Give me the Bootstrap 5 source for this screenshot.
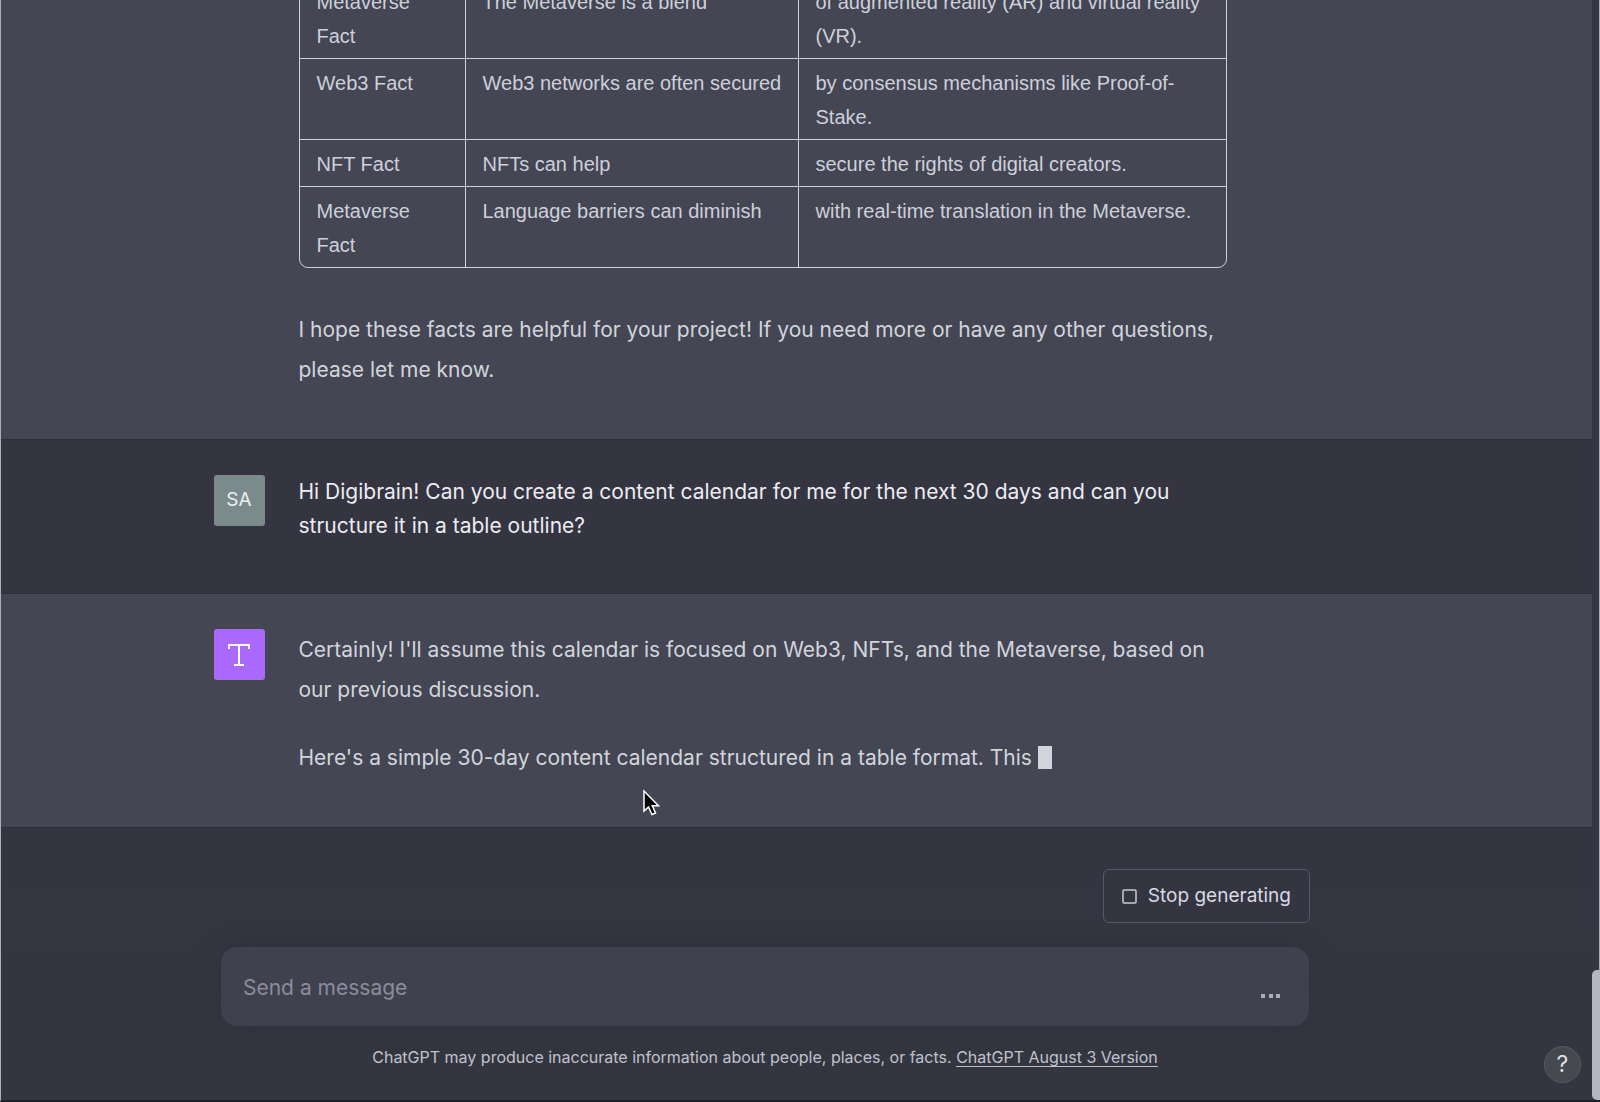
<!DOCTYPE html>
<html lang="en">
<head>
<meta charset="utf-8">
<meta name="viewport" content="width=device-width, initial-scale=1">
<title>ChatGPT</title>
<link href="https://cdn.jsdelivr.net/npm/bootstrap@5.3.0/dist/css/bootstrap.min.css" rel="stylesheet">
<style>
  body { font-family: Inter, "Liberation Sans", sans-serif; font-size: 21px; color: #ececf1; background: #343541; }
  .app { height: 100vh; border-left: 1px solid #a6b0b8; border-bottom: 2px solid #1f202a; }
  .pane { min-width: 0; }
  .scroll-track { width: 8px; background: #353643; border-right: 1px solid #a9a9b4; }
  .scroll-thumb { height: 130px; width: 8px; background: #b5b6c4; border-radius: 5px 0 0 5px; }
  .turn { padding: 35px 62px 50px 0; border-bottom: 1px solid #2e2f3b; }
  .turn-bot { padding-bottom: 49px; background: #444654; color: #d1d5db; }
  .turn-inner { max-width: 1104px; padding-right: 91px; gap: 34px; }
  .avatar { width: 51px; height: 51px; border-radius: 3px; font-size: 19px; }
  .avatar-user { background: #7b8b8c; color: #e8eeee; }
  .avatar-bot { background: #ab68ff; }
  .ask { line-height: 34px; }
  .answer { padding-top: 1px; }
  .answer p { line-height: 40px; margin-bottom: 28px; }
  .answer p:last-child { margin-bottom: 0; }
  .facts { font-family: "Liberation Sans", Arial, sans-serif; font-size: 20px; line-height: 34px; table-layout: fixed; border-collapse: separate; border-spacing: 0; border: 1px solid #d0d1de; border-radius: 9px; margin-bottom: 42px; color: #cdd0d9; }
  .facts td { padding: 7px 14px 5px 17px; vertical-align: top; border-left: 1px solid #d0d1de; border-top: 1px solid #d0d1de; }
  .facts td:first-child { border-left: 0; }
  .facts tr:first-child td { border-top: 0; }
  .facts .c1 { width: 165px; } .facts .c2 { width: 333px; }
  .caret { display: inline-block; width: 14px; height: 23px; background: #d1d5db; vertical-align: -4px; }
  .composer { padding: 41px 63px 31px 0; background: linear-gradient(#353542 20%, #34363f 45%); }
  .composer-inner { max-width: 1090px; }
  .stop { height: 54px; padding: 0 18px; gap: 11px; font-size: 19px; color: #d9d9e3; background: #343541; border: 1px solid #565869; border-radius: 6px; }
  .prompt { height: 79px; margin: 24px 1px 0; background: #40414f; border-radius: 16px; box-shadow: 0 0 22px rgba(48,46,64,.8); }
  .prompt input { font-size: 21px; padding: 2px 22px 0; background: transparent; border: 0; color: #fff; }
  .prompt input:focus { background: transparent; box-shadow: none; color: #fff; }
  .prompt input::placeholder { color: #8b8c9c; opacity: 1; }
  .send { padding: 18px 28px 0 12px; border: 0; }
  .notice { font-size: 16px; line-height: 24px; margin-top: 19px; color: #c0c1cf; }
  .notice a { color: inherit; text-underline-offset: 3px; }
  .help { right: 19px; bottom: 17px; width: 37px; height: 37px; padding: 0; font-size: 23px; line-height: 1; color: #dfdfe4; background: #46474f; border: 1px solid #585a60; }
  .pointer { left: 641px; top: 788px; }
</style>
<script src="https://cdn.jsdelivr.net/npm/bootstrap@5.3.0/dist/js/bootstrap.bundle.min.js"></script>
</head>
<body>
<div class="app d-flex overflow-hidden position-relative">
  <div class="pane d-flex flex-column flex-grow-1">
    <main class="d-flex flex-column justify-content-end flex-grow-1 overflow-hidden">
      <section class="turn turn-bot flex-shrink-0">
        <div class="turn-inner mx-auto d-flex">
          <div class="avatar flex-shrink-0"></div>
          <div class="answer flex-grow-1">
            <table class="facts w-100">
              <colgroup><col class="c1"><col class="c2"><col></colgroup>
              <tbody>
                <tr><td>Metaverse Fact</td><td>The Metaverse is a blend</td><td>of augmented reality (AR) and virtual reality (VR).</td></tr>
                <tr><td>Web3 Fact</td><td>Web3 networks are often secured</td><td>by consensus mechanisms like Proof-of-Stake.</td></tr>
                <tr><td>NFT Fact</td><td>NFTs can help</td><td>secure the rights of digital creators.</td></tr>
                <tr><td>Metaverse Fact</td><td>Language barriers can diminish</td><td>with real-time translation in the Metaverse.</td></tr>
              </tbody>
            </table>
            <p>I hope these facts are helpful for your project! If you need more or have any other questions, please let me know.</p>
          </div>
        </div>
      </section>
      <section class="turn flex-shrink-0">
        <div class="turn-inner mx-auto d-flex">
          <div class="avatar avatar-user d-flex align-items-center justify-content-center flex-shrink-0">SA</div>
          <div class="ask flex-grow-1">Hi Digibrain! Can you create a content calendar for me for the next 30 days and can you structure it in a table outline?</div>
        </div>
      </section>
      <section class="turn turn-bot flex-shrink-0">
        <div class="turn-inner mx-auto d-flex">
          <div class="avatar avatar-bot d-flex align-items-center justify-content-center flex-shrink-0">
            <svg width="22" height="22" viewBox="0 0 22 22" fill="none" stroke="#fff" stroke-width="2" aria-hidden="true"><path d="M1 5V1H21V5M11 1V21M6 21H16"/></svg>
          </div>
          <div class="answer flex-grow-1">
            <p>Certainly! I'll assume this calendar is focused on Web3, NFTs, and the Metaverse, based on our previous discussion.</p>
            <p>Here's a simple 30-day content calendar structured in a table format. This <span class="caret"></span></p>
          </div>
        </div>
      </section>
    </main>
    <footer class="composer flex-shrink-0">
      <form class="composer-inner mx-auto" onsubmit="return false">
        <div class="d-flex justify-content-end">
          <button type="button" class="stop btn d-flex align-items-center">
            <svg width="15" height="15" viewBox="0 0 15 15" fill="none" stroke="#c9c9d6" stroke-width="1.5" aria-hidden="true"><rect x="1" y="1" width="13" height="13" rx="1"/></svg>
            Stop generating
          </button>
        </div>
        <div class="prompt d-flex align-items-stretch">
          <input type="text" class="form-control" placeholder="Send a message" aria-label="Send a message">
          <button type="submit" class="send btn" aria-label="Generating">
            <svg width="20" height="4" viewBox="0 0 20 4" fill="#acacbe" class="d-block" aria-hidden="true"><path d="M0 0h4v4H0zM8 0h4v4H8zM15 0h4v4h-4z"/></svg>
          </button>
        </div>
        <div class="notice text-center">ChatGPT may produce inaccurate information about people, places, or facts. <a href="#">ChatGPT August 3 Version</a></div>
      </form>
    </footer>
  </div>
  <div class="scroll-track d-flex flex-column justify-content-end flex-shrink-0"><div class="scroll-thumb"></div></div>
  <button type="button" class="help btn rounded-circle position-absolute" aria-label="Help">?</button>
  <svg class="pointer position-absolute" width="20" height="29" viewBox="0 0 20 29" aria-hidden="true"><path d="M2 3V23L6.500 19L10 26.500L13.500 25L10.300 17.800H16.500Z" fill="#000" stroke="#fff" stroke-width="1.500"/></svg>
</div>
</body>
</html>
